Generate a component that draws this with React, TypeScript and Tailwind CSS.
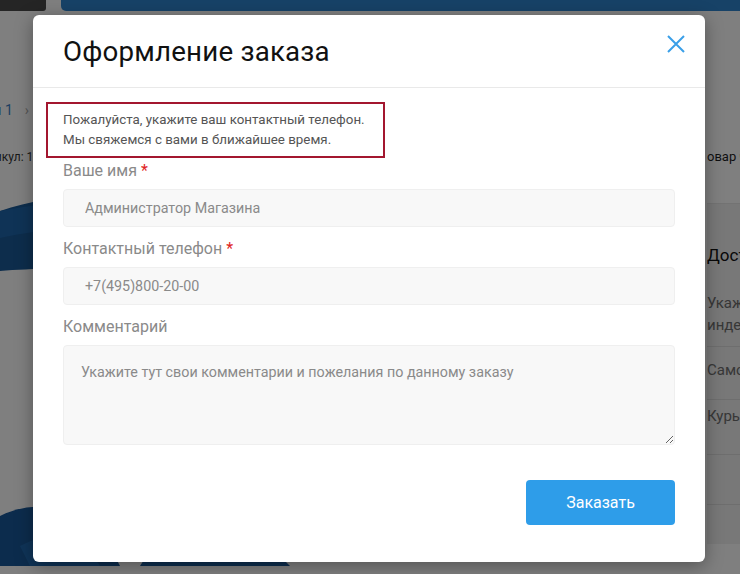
const FONT = "font-['Roboto','Liberation_Sans',sans-serif]"

function PageBehind() {
  return (
    <div className="h-[574px] w-[740px] overflow-hidden bg-white">
      <div className="flex h-[11px] gap-[15px]">
        <div className="w-[46px] rounded-br-[3px] bg-[#4a4a4a]" />
        <div className="flex-1 rounded-bl-[5px] bg-[#2f85cf]" />
      </div>
      <div className="flex">
        <div className="w-[707px] shrink-0">
          <div className="mt-[89px] flex w-[29px] justify-end overflow-hidden whitespace-nowrap text-[14px] text-[#3d7fc2]">
            <span>Категория 1</span>
            <span className="ml-[12px] text-[#aaa]">›</span>
          </div>
          <div className="mt-[27px] flex w-[40px] justify-end overflow-hidden whitespace-nowrap text-[12px] text-[#333]">
            Артикул: 16
          </div>
          <svg className="mt-[20px]" width="320" height="380" viewBox="0 0 320 380">
            <path d="M0 25 C60 5 140 0 260 35 L260 120 C160 80 60 80 0 85 Z" fill="#1a5a98" />
            <path d="M0 25 C40 17 90 13 130 17 L130 40 C80 40 30 45 0 52 Z" fill="#1e66ac" />
            <path d="M0 330 C40 310 90 320 120 380 L0 380 Z" fill="#19589a" />
            <path d="M140 380 C170 330 230 320 290 380 Z" fill="#1a5c9f" />
            <path d="M20 360 C60 340 80 350 100 380 L30 380 Z" fill="#1f69b0" />
          </svg>
        </div>
        <div className="min-w-0 flex-1 overflow-hidden whitespace-nowrap">
          <div className="mt-[136px] text-[13px] text-[#1f1f1f]">овар ч</div>
          <div className="mt-[36px] bg-[#f0f0f0]">
            <div className="border-t border-[#e6e6e6] pt-[39px] text-[17px] text-[#111]">
              Доставка
            </div>
            <div className="mt-[24px] text-[15px] leading-[22px] text-[#6e6e6e]">
              Укажите
              <br />
              индекс
            </div>
            <div className="mt-[10px] flex h-[53px] items-center border-t border-[#dcdcdc] pb-[6px] text-[15px] text-[#6e6e6e]">
              Самовывоз
            </div>
            <div className="flex h-[55px] items-center border-t border-[#dcdcdc] pb-[22px] text-[15px] text-[#6e6e6e]">
              Курьер
            </div>
            <div className="h-[50px] border-t border-[#dcdcdc]" />
            <div className="h-[40px] border-t border-[#dcdcdc]" />
          </div>
        </div>
      </div>
    </div>
  )
}

function Field({
  label,
  required,
  value,
}: {
  label: string
  required?: boolean
  value: string
}) {
  return (
    <div>
      <div className="text-[16px] leading-[20px] text-[#8a8a8a]">
        {label}
        {required ? <span className="ml-[4px] text-[#e02424]">*</span> : null}
      </div>
      <input
        readOnly
        value={value}
        className="mt-[8px] h-[38px] w-full rounded-[4px] border border-[#efefef] bg-[#f8f8f8] px-[21px] text-[14.3px] text-[#8a8a8a] outline-none"
      />
    </div>
  )
}

export default function App() {
  return (
    <div className={`relative h-[574px] w-[740px] overflow-hidden ${FONT}`}>
      <PageBehind />
      <div className="absolute inset-0 bg-black/50" />
      <div className="absolute left-[33px] top-[15px] w-[672px] rounded-[6px] bg-white shadow-[0_4px_18px_rgba(0,0,0,0.35)]">
        <div className="flex h-[73px] items-start justify-between border-b border-[#e9e9e9] pl-[30px] pr-[20px]">
          <h2 className="mt-[20px] text-[27.7px] font-normal leading-[34px] tracking-[0.2px] text-[#111]">
            Оформление заказа
          </h2>
          <svg className="mt-[20px]" width="18" height="18" viewBox="0 0 18 18" aria-hidden>
            <path d="M1 1 L17 17 M17 1 L1 17" stroke="#3a9fe8" strokeWidth="2" />
          </svg>
        </div>
        <div className="px-[30px] pb-[37px] pt-[14px]">
          <div className="-ml-[17px] w-[339px] border-2 border-[#a3172f] py-[6px] pl-[15px] text-[13.35px] leading-[20px] text-[#555]">
            Пожалуйста, укажите ваш контактный телефон.
            <br />
            Мы свяжемся с вами в ближайшее время.
          </div>
          <div className="mt-[3px] flex flex-col gap-[12px]">
            <Field label="Ваше имя" required value="Администратор Магазина" />
            <Field label="Контактный телефон" required value="+7(495)800-20-00" />
            <div>
              <div className="text-[16px] leading-[20px] text-[#8a8a8a]">Комментарий</div>
              <textarea
                placeholder="Укажите тут свои комментарии и пожелания по данному заказу"
                className="mt-[8px] block h-[100px] w-full resize-y rounded-[4px] border border-[#efefef] bg-[#f8f8f8] px-[17px] py-[16px] text-[14.3px] text-[#8a8a8a] outline-none placeholder:text-[#8a8a8a]"
              />
            </div>
          </div>
          <div className="mt-[35px] flex justify-end">
            <button className="h-[45px] w-[149px] rounded-[4px] bg-[#2e9de9] text-[16px] text-white">
              Заказать
            </button>
          </div>
        </div>
      </div>
    </div>
  )
}
